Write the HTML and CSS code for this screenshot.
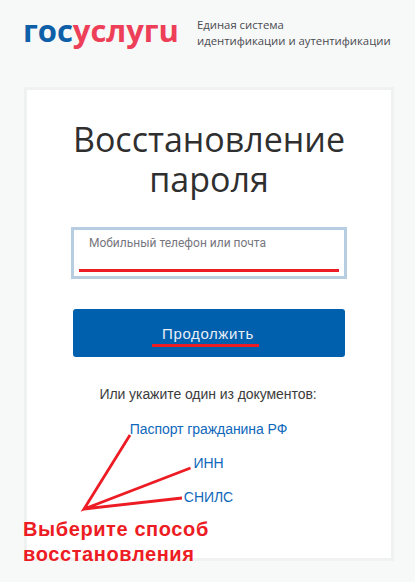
FILE: index.html
```html
<!DOCTYPE html>
<html lang="ru">
<head>
<meta charset="utf-8">
<title>Восстановление пароля</title>
<link rel="stylesheet" href="styles.css">
</head>
<body>
<div class="page">
  <header class="header">
    <div class="logo"><span class="logo-blue">гос</span><span class="logo-red">услугu</span></div>
    <div class="tagline">Единая система<br>идентификации и аутентификации</div>
  </header>
  <main class="card">
    <h1 class="title">Восстановление пароля</h1>
    <div class="field">
      <span class="field-label">Мобильный телефон или почта</span>
      <span class="field-mark"></span>
    </div>
    <button class="submit" type="button"><span class="submit-text">Продолжить</span></button>
    <p class="hint">Или укажите один из документов:</p>
    <ul class="docs">
      <li><a href="#">Паспорт гражданина РФ</a></li>
      <li><a href="#">ИНН</a></li>
      <li><a href="#">СНИЛС</a></li>
    </ul>
  </main>
  <svg class="arrows" width="415" height="582" viewBox="0 0 415 582" aria-hidden="true">
    <path d="M130 435 L84 509 L190.500 468 M84 509 L182 498"/>
  </svg>
  <div class="note">Выберите способ<br>восстановления</div>
</div>
</body>
</html>
```

FILE: styles.css
```css
* { box-sizing: border-box; }
html, body { margin: 0; padding: 0; }
body { background: #f7f8f8; font-family: "Liberation Sans", Arial, sans-serif; }
.page { position: relative; width: 415px; height: 582px; overflow: hidden; padding: 15px 24px 0; }
.header { display: flex; align-items: flex-start; height: 72px; }
.logo { font-family: "Open Sans", sans-serif; font-weight: 700; font-size: 31px; line-height: 30px; letter-spacing: -0.05px; width: 173px; margin-left: -1px; padding-right: 1px; flex: none; white-space: nowrap; }
.logo-blue { color: #0d5fa8; }
.logo-red { color: #ee3f58; }
.tagline { font-family: "Open Sans", sans-serif; font-size: 11.3px; line-height: 16px; color: #4a4a50; padding-top: 2px; margin-left: 1px; white-space: nowrap; }
.card { width: 370px; height: 474px; background: #fff; border: 3px solid #f0f1f1; padding: 29px 46px 0; display: flex; flex-direction: column; align-items: stretch; }
.title { margin: 0 -20px; font-family: "Open Sans", sans-serif; font-weight: 400; font-size: 34px; line-height: 40px; color: #2f2f2f; text-align: center; }
.field { position: relative; height: 52px; margin: 28px -2px 0; border: 3px solid #b6cde2; background: #fff; }
.field-label { position: absolute; left: 15px; top: 5px; font-family: Roboto, sans-serif; font-size: 12px; line-height: 16px; color: #76767e; white-space: nowrap; }
.field-mark { position: absolute; left: 5px; right: 5px; bottom: 4px; height: 3px; background: #ed1c24; }
.submit { display: block; height: 48px; margin-top: 30px; padding: 0 7px 0 0; border: 0; border-radius: 3px; background: #0060ae; color: #e8eef6; font-family: "Liberation Sans", Arial, sans-serif; font-size: 15px; letter-spacing: 0.6px; }
.submit-text { display: inline-block; position: relative; top: 3px; padding: 0 5px 2px 10px; line-height: 16px; border-bottom: 3px solid #ed1c24; }
.hint { margin: 28px -20px 0 -22px; font-size: 14px; line-height: 18px; letter-spacing: -0.06px; color: #3c3c3c; text-align: center; }
.docs { list-style: none; margin: 17px 0 0 -1px; padding: 0; text-align: center; font-size: 14px; line-height: 18px; letter-spacing: -0.06px; }
.docs li { margin-bottom: 16px; }
.docs a { color: #0f68bb; text-decoration: none; }
.arrows { position: absolute; left: 0; top: 0; pointer-events: none; }
.arrows path { fill: none; stroke: #ed1c24; stroke-width: 2.8; }
.note { position: absolute; left: 23px; top: 517px; font-size: 20px; line-height: 25px; letter-spacing: 0.6px; font-weight: 700; color: #ed1c24; white-space: nowrap; }
```
